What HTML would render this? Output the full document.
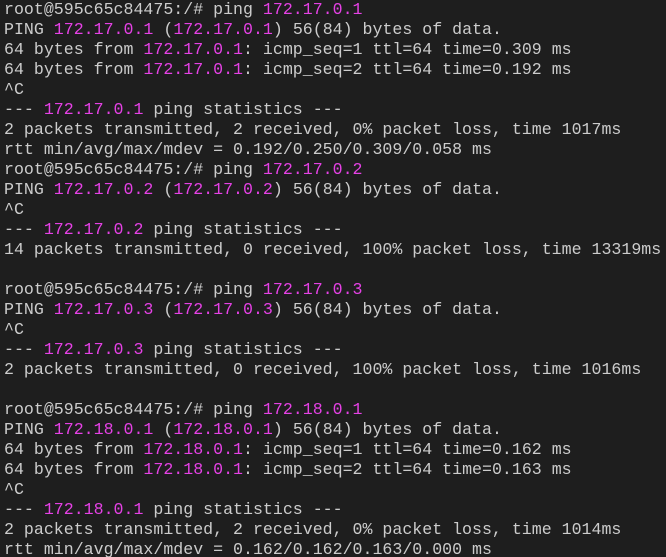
<!DOCTYPE html><html><head><style>
html,body{margin:0;background:#1e1e1e;width:666px;height:557px;overflow:hidden}
pre{margin:0;padding:0 0 0 4px;font-family:"Liberation Mono","DejaVu Sans Mono",monospace;font-size:16.6px;line-height:20px;color:#cccccc;white-space:pre}
b{font-weight:normal;color:#e541e5}
</style></head><body><pre>root@595c65c84475:/# ping <b>172.17.0.1</b>
PING <b>172.17.0.1</b> (<b>172.17.0.1</b>) 56(84) bytes of data.
64 bytes from <b>172.17.0.1</b>: icmp_seq=1 ttl=64 time=0.309 ms
64 bytes from <b>172.17.0.1</b>: icmp_seq=2 ttl=64 time=0.192 ms
^C
--- <b>172.17.0.1</b> ping statistics ---
2 packets transmitted, 2 received, 0% packet loss, time 1017ms
rtt min/avg/max/mdev = 0.192/0.250/0.309/0.058 ms
root@595c65c84475:/# ping <b>172.17.0.2</b>
PING <b>172.17.0.2</b> (<b>172.17.0.2</b>) 56(84) bytes of data.
^C
--- <b>172.17.0.2</b> ping statistics ---
14 packets transmitted, 0 received, 100% packet loss, time 13319ms

root@595c65c84475:/# ping <b>172.17.0.3</b>
PING <b>172.17.0.3</b> (<b>172.17.0.3</b>) 56(84) bytes of data.
^C
--- <b>172.17.0.3</b> ping statistics ---
2 packets transmitted, 0 received, 100% packet loss, time 1016ms

root@595c65c84475:/# ping <b>172.18.0.1</b>
PING <b>172.18.0.1</b> (<b>172.18.0.1</b>) 56(84) bytes of data.
64 bytes from <b>172.18.0.1</b>: icmp_seq=1 ttl=64 time=0.162 ms
64 bytes from <b>172.18.0.1</b>: icmp_seq=2 ttl=64 time=0.163 ms
^C
--- <b>172.18.0.1</b> ping statistics ---
2 packets transmitted, 2 received, 0% packet loss, time 1014ms
rtt min/avg/max/mdev = 0.162/0.162/0.163/0.000 ms</pre></body></html>
